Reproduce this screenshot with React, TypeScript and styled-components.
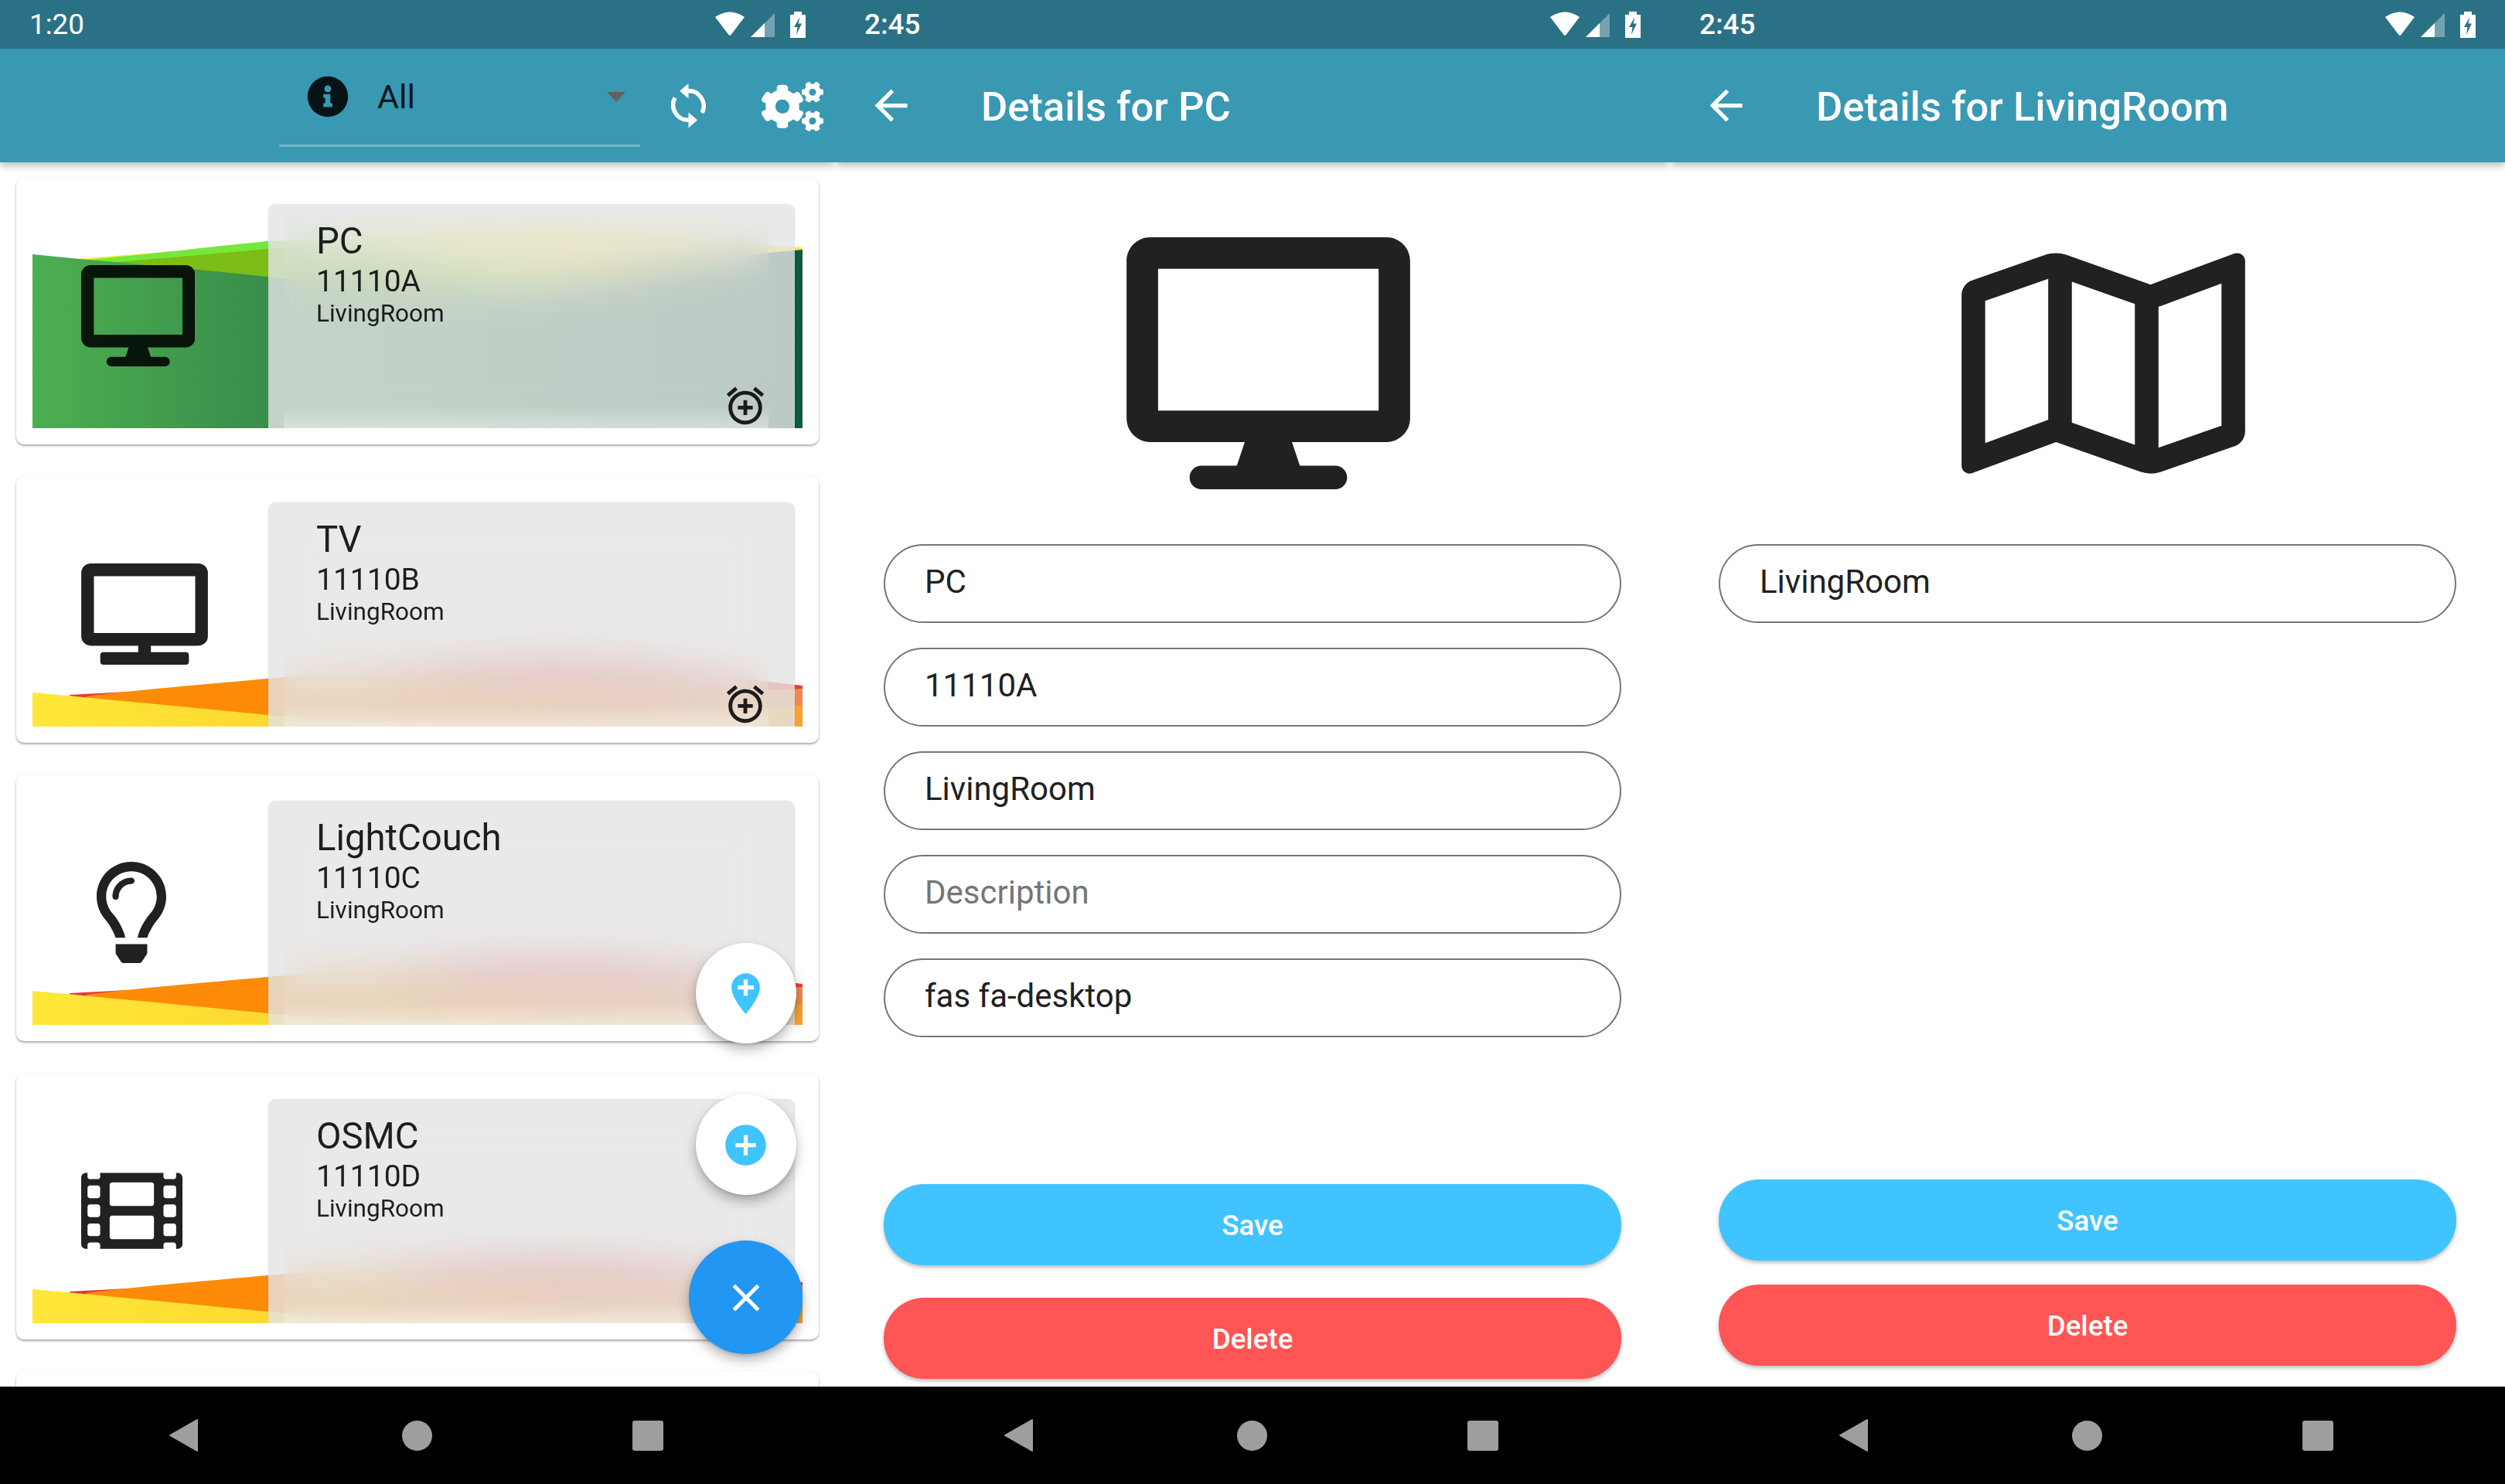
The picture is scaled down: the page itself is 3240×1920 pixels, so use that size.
import React from 'react';
import styled, { createGlobalStyle } from 'styled-components';
import { FaCogs, FaDesktop, FaFilm, FaInfoCircle, FaRegLightbulb, FaRegMap, FaTv } from 'react-icons/fa';
import { MdAddCircle, MdAddLocation, MdAlarmAdd, MdArrowBack, MdClose } from 'react-icons/md';

const INK = 'rgba(0,0,0,.87)';
const BAR = '#3998b2';
const STATUS = '#2b7186';

const Global = createGlobalStyle`
    html, body { margin: 0; padding: 0; background: #fff; }
    * { box-sizing: border-box; }
    body { font-family: Roboto, "Liberation Sans", sans-serif; }
`;

const Screens = styled.div`
    display: flex;
    width: 3240px;
    height: 1920px;
    overflow: hidden;
`;
const Phone = styled.div`
    display: flex;
    flex-direction: column;
    width: 1080px;
    height: 1920px;
    overflow: hidden;
    background: #fff;
`;

const StatusBar = styled.div`
    display: flex;
    align-items: center;
    justify-content: space-between;
    height: 63px;
    padding: 0 38px;
    background: ${STATUS};
    flex-shrink: 0;
    position: relative;
    z-index: 3;
`;
const Clock = styled.span<{ $wide?: boolean }>`
    color: #fff;
    font-size: 36.75px;
    font-weight: ${p => (p.$wide ? 500 : 400)};
`;
const StatusIcons = styled.div`
    display: flex;
    align-items: flex-start;
    height: 34px;
`;
const WifiIcon = styled.svg`
    width: 40px;
    height: 32px;
    margin-right: 7px;
`;
const SignalIcon = styled.svg`
    width: 31px;
    height: 31px;
    margin: 2px 20px 0 0;
`;
const BatteryIcon = styled.svg`
    width: 20px;
    height: 34px;
`;

const MainBar = styled.div`
    display: flex;
    align-items: center;
    height: 147px;
    padding-left: 361px;
    background: ${BAR};
    box-shadow: 0 4px 10px rgba(0,0,0,.28);
    position: relative;
    z-index: 2;
    flex-shrink: 0;
`;
const Dropdown = styled.div`
    display: flex;
    align-items: center;
    align-self: flex-start;
    width: 467px;
    height: 127px;
    padding: 0 19px 0 36px;
    border-bottom: 3px solid rgba(255,255,255,.3);
    color: ${INK};
    font-size: 43px;
`;
const DropdownText = styled.span`
    margin-left: 37px;
`;
const Caret = styled.i`
    margin-left: auto;
    width: 0;
    height: 0;
    border-left: 12.5px solid transparent;
    border-right: 12.5px solid transparent;
    border-top: 13px solid #616161;
`;
const SyncIcon = styled.svg`
    width: 45px;
    height: 58px;
    margin-left: 40px;
`;
const GearButton = styled.div`
    display: flex;
    margin-left: 72px;
    margin-top: 2px;
    color: #fff;
`;

const DetailBar = styled(MainBar)`
    padding-left: 41px;
    color: #fff;
`;
const BarTitle = styled.h1`
    margin: 2px 0 0 85px;
    font-size: 52.5px;
    font-weight: 500;
    color: #fff;
    white-space: nowrap;
`;

const ListArea = styled.div`
    position: relative;
    flex: 1;
    min-height: 0;
    overflow: hidden;
    display: flex;
    flex-direction: column;
    gap: 41px;
    padding: 20px 21px 0;
`;
const Card = styled.div`
    flex-shrink: 0;
    height: 345px;
    padding: 21px;
    background: #fff;
    border-radius: 10px;
    box-shadow: 0 2px 3px rgba(0,0,0,.32), 0 0 2px rgba(0,0,0,.08);
`;
const CardArt = styled.div`
    position: relative;
    display: flex;
    height: 303px;
    overflow: hidden;
`;
const WaveLayer = styled.svg`
    position: absolute;
    inset: 0;
    width: 100%;
    height: 100%;
`;
const IconSlot = styled.div<{ $inset: number; $width: number }>`
    position: relative;
    flex: 0 0 305px;
    padding: 92px 0 0 ${p => p.$inset}px;
    color: ${INK};
    line-height: 0;
    svg {
        width: ${p => p.$width}px;
        height: 131px;
    }
`;
const Glass = styled.div`
    position: relative;
    flex: 1;
    margin: 13px 10px 0 0;
    padding: 14px 34px 0 20px;
    background: rgba(228,228,228,.81);
    border-radius: 9px 9px 0 0;
    box-shadow: 0 0 2px rgba(0,0,0,.12);
`;
const Frosted = styled.div`
    height: 100%;
    padding: 7px 0 0 42px;
    color: ${INK};
    background: linear-gradient(to top, rgba(255,255,255,.34), rgba(255,255,255,0) 30px);
    backdrop-filter: blur(26px);
`;
const CardName = styled.div`
    font-size: 47.25px;
    line-height: 55px;
`;
const CardId = styled.div`
    margin-top: 2px;
    font-size: 39px;
    line-height: 45px;
`;
const CardRoom = styled.div`
    font-size: 31.5px;
    line-height: 37px;
`;
const AlarmMark = styled.div`
    position: absolute;
    right: 45px;
    bottom: 0;
    line-height: 0;
    color: ${INK};
`;

const FabStack = styled.div`
    position: absolute;
    right: 42px;
    bottom: 42px;
    display: flex;
    flex-direction: column;
    align-items: center;
    z-index: 1;
`;
const MiniFab = styled.div<{ $gap: number }>`
    display: flex;
    align-items: center;
    justify-content: center;
    width: 130px;
    height: 130px;
    margin-bottom: ${p => p.$gap}px;
    border-radius: 50%;
    background: #fff;
    color: #40c4ff;
    box-shadow: 0 8px 16px rgba(0,0,0,.28), 0 2px 4px rgba(0,0,0,.12);
`;
const MainFab = styled.div`
    display: flex;
    align-items: center;
    justify-content: center;
    width: 147px;
    height: 147px;
    border-radius: 50%;
    background: #2196f3;
    color: #fff;
    box-shadow: 0 8px 16px rgba(0,0,0,.28), 0 2px 4px rgba(0,0,0,.12);
`;

const DetailBody = styled.div`
    flex: 1;
    min-height: 0;
    display: flex;
    flex-direction: column;
    padding: 97px 63px 0;
`;
const HeroIcon = styled.div`
    display: flex;
    justify-content: center;
    height: 326px;
    margin-bottom: 71px;
    padding-left: 41px;
    color: #212121;
    svg {
        width: 367px;
        height: 326px;
    }
`;
const Form = styled.div`
    display: flex;
    flex-direction: column;
    gap: 32px;
`;
const Field = styled.div<{ $hint?: boolean }>`
    display: flex;
    align-items: center;
    height: 102px;
    padding: 0 0 6px 51px;
    border: 2.6px solid #757575;
    border-radius: 51px;
    font-size: 42px;
    color: ${p => (p.$hint ? '#757575' : '#212121')};
`;
const Actions = styled.div<{ $gap: number; $bottom: number }>`
    display: flex;
    flex-direction: column;
    gap: ${p => p.$gap}px;
    margin-top: auto;
    padding-bottom: ${p => p.$bottom}px;
`;
const ActionButton = styled.div<{ $color: string }>`
    display: flex;
    align-items: center;
    justify-content: center;
    height: 105px;
    padding-top: 2px;
    border-radius: 52px;
    background: ${p => p.$color};
    color: #fff;
    font-size: 36.75px;
    font-weight: 500;
    box-shadow: 0 3px 5px rgba(0,0,0,.26);
`;

const NavBar = styled.div`
    display: flex;
    align-items: center;
    justify-content: center;
    height: 126px;
    padding-right: 3px;
    background: #000;
    flex-shrink: 0;
    position: relative;
    z-index: 2;
`;
const NavBack = styled.svg`
    width: 37px;
    height: 42px;
`;
const NavHome = styled.i`
    width: 39px;
    height: 39px;
    margin: 0 259px 0 264px;
    border-radius: 50%;
    background: #9e9e9e;
`;
const NavRecent = styled.i`
    width: 40px;
    height: 39px;
    border-radius: 3px;
    background: #9e9e9e;
`;

type WaveKind = 'green' | 'amber';
type WaveLayerDef = { from: string; to: string; d: string };

const waves: Record<WaveKind, { layers: WaveLayerDef[]; from: string; mid: string; to: string; front: string }> = {
    green: {
        from: '#4caf50',
        mid: '#388e4b',
        to: '#0f5a3f',
        layers: [
            { from: '#ffeb3b', to: '#ffeb3b', d: 'M45,85 C200,72 450,55 660,46 C800,50 900,64 996,69 L996,303 L45,303 Z' },
            { from: '#76e83a', to: '#76e83a', d: 'M70,85 C150,78 250,66 304,61 C400,54 500,82 620,104 C760,122 900,90 996,74 L996,303 L70,303 Z' },
            { from: '#7cbd18', to: '#7cbd18', d: 'M110,88 C180,82 250,76 304,71 C420,64 520,94 640,130 L640,303 L110,303 Z' },
        ],
        front: 'M0,78 C100,88 200,96 304,107 C430,122 560,135 700,115 C820,95 920,78 996,72 L996,303 L0,303 Z',
    },
    amber: {
        from: '#ffe83a',
        mid: '#fed92f',
        to: '#faa030',
        layers: [
            { from: '#e53935', to: '#ef3c36', d: 'M48,262 C150,257 250,251 304,248 C430,238 520,219 680,218 C800,218 900,240 996,250 L996,303 L48,303 Z' },
            { from: '#fd8b08', to: '#ee8a50', d: 'M70,264 C130,256 250,246 304,241 C420,230 500,244 620,256 C760,268 900,258 996,254 L996,303 L70,303 Z' },
        ],
        front: 'M0,259 C100,268 200,278 304,288 C430,298 620,300 760,291 C860,284 940,278 996,276 L996,303 L0,303 Z',
    },
};

const Wave = ({ kind, id }: { kind: WaveKind; id: string }) => {
    const w = waves[kind];
    return (
        <WaveLayer viewBox="0 0 996 303" preserveAspectRatio="none">
            <defs>
                <linearGradient id={id} x1="0" x2="1" y1="0" y2="0">
                    <stop offset="0" stopColor={w.from} />
                    <stop offset=".305" stopColor={w.mid} />
                    <stop offset="1" stopColor={w.to} />
                </linearGradient>
                {w.layers.map((l, i) => (
                    <linearGradient key={i} id={`${id}-${i}`} x1="0" x2="1" y1="0" y2="0">
                        <stop offset=".6" stopColor={l.from} />
                        <stop offset="1" stopColor={l.to} />
                    </linearGradient>
                ))}
            </defs>
            {w.layers.map((l, i) => <path key={i} d={l.d} fill={`url(#${id}-${i})`} />)}
            <path d={w.front} fill={`url(#${id})`} />
        </WaveLayer>
    );
};

const devices = [
    { name: 'PC', code: '11110A', wave: 'green' as WaveKind, icon: <FaDesktop />, inset: 63, width: 147.4, alarm: true },
    { name: 'TV', code: '11110B', wave: 'amber' as WaveKind, icon: <FaTv />, inset: 63, width: 164, alarm: true },
    { name: 'LightCouch', code: '11110C', wave: 'amber' as WaveKind, icon: <FaRegLightbulb />, inset: 83, width: 90, alarm: false },
    { name: 'OSMC', code: '11110D', wave: 'amber' as WaveKind, icon: <FaFilm />, inset: 63, width: 131, alarm: false },
];

const Status = ({ time, wide }: { time: string; wide?: boolean }) => (
    <StatusBar>
        <Clock $wide={wide}>{time}</Clock>
        <StatusIcons>
            <WifiIcon viewBox="0 0 40 32">
                <path d="M1,7 Q20,-6 39,7 L21.5,30 Q20,32 18.5,30 Z" fill="#fff" />
            </WifiIcon>
            <SignalIcon viewBox="0 0 31 31">
                <path d="M31,0 V31 H0 Z" fill="#fff" opacity=".35" />
                <path d="M18,13 V31 H0 Z" fill="#fff" />
            </SignalIcon>
            <BatteryIcon viewBox="0 0 20 34">
                <path d="M5,0 H15 V4 H20 V34 H0 V4 H5 Z" fill="#fff" />
                <path d="M12.5,7 L5,20 H9.5 L8,30 L15,15.5 H10.5 Z" fill={STATUS} />
            </BatteryIcon>
        </StatusIcons>
    </StatusBar>
);

const Nav = () => (
    <NavBar>
        <NavBack viewBox="0 0 37 42">
            <path d="M36,1 L1,21 L36,41 Z" fill="#9e9e9e" stroke="#9e9e9e" strokeWidth="2" strokeLinejoin="round" />
        </NavBack>
        <NavHome />
        <NavRecent />
    </NavBar>
);

const DetailScreen = ({ title, hero, fields, gap, bottom }: {
    title: string; hero: React.ReactNode; fields: { text: string; hint?: boolean }[]; gap: number; bottom: number;
}) => (
    <Phone>
        <Status time="2:45" wide />
        <DetailBar>
            <MdArrowBack size={63} />
            <BarTitle>{title}</BarTitle>
        </DetailBar>
        <DetailBody>
            <HeroIcon>{hero}</HeroIcon>
            <Form>
                {fields.map(f => <Field key={f.text} $hint={f.hint}>{f.text}</Field>)}
            </Form>
            <Actions $gap={gap} $bottom={bottom}>
                <ActionButton $color="#40c4ff">Save</ActionButton>
                <ActionButton $color="#ff5555">Delete</ActionButton>
            </Actions>
        </DetailBody>
        <Nav />
    </Phone>
);

const App = () => (
    <Screens>
        <Global />
        <Phone>
            <Status time="1:20" />
            <MainBar>
                <Dropdown>
                    <FaInfoCircle size={54} />
                    <DropdownText>All</DropdownText>
                    <Caret />
                </Dropdown>
                <SyncIcon viewBox="0 0 45 58" fill="none" stroke="#fff" strokeWidth="5.5">
                    <path d="M21,9.7 A19.5,19.5 0 0 1 40,38" />
                    <path d="M23,47.3 A19.5,19.5 0 0 1 5,18.5" />
                    <path d="M22.5,0 V19.5 L11,9.7 Z" fill="#fff" stroke="none" />
                    <path d="M22.5,37.5 V57.5 L34,47.3 Z" fill="#fff" stroke="none" />
                </SyncIcon>
                <GearButton><FaCogs size={80} /></GearButton>
            </MainBar>
            <ListArea>
                {devices.map(d => (
                    <Card key={d.code}>
                        <CardArt>
                            <Wave kind={d.wave} id={`wave-${d.code}`} />
                            <IconSlot $inset={d.inset} $width={d.width}>{d.icon}</IconSlot>
                            <Glass>
                                <Frosted>
                                    <CardName>{d.name}</CardName>
                                    <CardId>{d.code}</CardId>
                                    <CardRoom>LivingRoom</CardRoom>
                                </Frosted>
                            </Glass>
                            {d.alarm && <AlarmMark><MdAlarmAdd size={58} /></AlarmMark>}
                        </CardArt>
                    </Card>
                ))}
                <Card />
                <FabStack>
                    <MiniFab $gap={66}><MdAddLocation size={63} /></MiniFab>
                    <MiniFab $gap={59}><MdAddCircle size={63} /></MiniFab>
                    <MainFab><MdClose size={60} /></MainFab>
                </FabStack>
            </ListArea>
            <Nav />
        </Phone>
        <DetailScreen
            title="Details for PC"
            hero={<FaDesktop />}
            gap={42}
            bottom={10}
            fields={[{ text: 'PC' }, { text: '11110A' }, { text: 'LivingRoom' }, { text: 'Description', hint: true }, { text: 'fas fa-desktop' }]}
        />
        <DetailScreen
            title="Details for LivingRoom"
            hero={<FaRegMap />}
            gap={31}
            bottom={27}
            fields={[{ text: 'LivingRoom' }]}
        />
    </Screens>
);

export default App;
